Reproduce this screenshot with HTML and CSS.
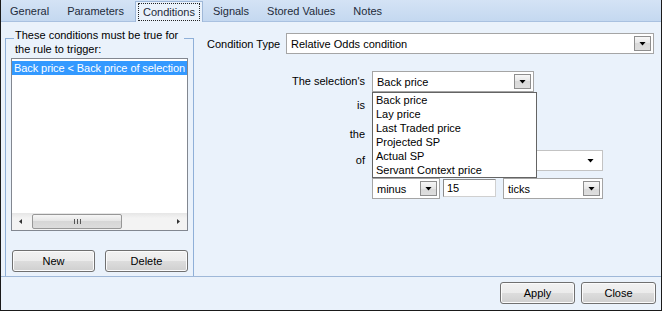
FILE: index.html
```html
<html>
<head>
    <title>Rule Conditions</title>
    <link rel="stylesheet" href="styles.css">
</head>
<body>
<div class="window">
    <div class="tabs">
        <span class="tab">General</span>
        <span class="tab">Parameters</span>
        <span class="tab active"><span class="focus">Conditions</span></span>
        <span class="tab">Signals</span>
        <span class="tab">Stored Values</span>
        <span class="tab">Notes</span>
    </div>

    <div class="page">
        <div class="group">
            <div class="caption">These conditions must be true for the rule to trigger:</div>
            <div class="list">
                <div class="items">
                    <div class="item selected">Back price &lt; Back price of selection</div>
                </div>
                <div class="hscroll">
                    <span class="sb-btn"><span class="arrow-left"></span></span>
                    <span class="track"><span class="thumb"><span class="grip"></span></span></span>
                    <span class="sb-btn"><span class="arrow-right"></span></span>
                </div>
            </div>
            <div class="group-buttons">
                <button class="btn">New</button>
                <button class="btn">Delete</button>
            </div>
        </div>

        <div class="editor">
            <div class="type-row">
                <label class="type-label">Condition Type</label>
                <div class="combo grow"><span class="value">Relative Odds condition</span><span class="drop"></span></div>
            </div>

            <div class="fields">
                <label class="field-label">The selection's</label>
                <div class="cell">
                    <div class="combo w-sel"><span class="value">Back price</span><span class="drop"></span></div>
                    <div class="dropdown">
                        <div class="option">Back price</div>
                        <div class="option">Lay price</div>
                        <div class="option">Last Traded price</div>
                        <div class="option">Projected SP</div>
                        <div class="option">Actual SP</div>
                        <div class="option">Servant Context price</div>
                    </div>
                </div>

                <label class="field-label">is</label>
                <div class="cell">
                    <div class="combo w-is"><span class="value"></span><span class="drop"></span></div>
                </div>

                <label class="field-label">the</label>
                <div class="cell">
                    <div class="combo w-the"><span class="value"></span><span class="drop"></span></div>
                </div>

                <label class="field-label">of</label>
                <div class="cell">
                    <div class="combo flat w-of"><span class="value"></span><span class="drop"></span></div>
                </div>

                <span></span>
                <div class="cell inline">
                    <div class="combo w-minus"><span class="value">minus</span><span class="drop"></span></div>
                    <div class="textbox">15</div>
                    <div class="combo w-ticks"><span class="value">ticks</span><span class="drop"></span></div>
                </div>
            </div>
        </div>
    </div>

    <div class="footer">
        <button class="btn wide">Apply</button>
        <button class="btn wide">Close</button>
    </div>
</div>
</body>
</html>
```

FILE: styles.css
```css
* {
    box-sizing: border-box;
}

body {
    margin: 0;
    font: 11px "Liberation Sans", Arial, sans-serif;
    color: #000;
    background: #fff;
}

.window {
    width: 662px;
    height: 311px;
    border: 1px solid #1a1a1a;
    border-top: 0;
    background: #eaf2fb;
    display: flex;
    flex-direction: column;
}

/* tab strip */
.tabs {
    height: 21px;
    flex: none;
    display: flex;
    align-items: flex-end;
    background: linear-gradient(#d4e3f5, #c4d8f0);
}

.tab {
    height: 21px;
    padding: 2px 9px 0;
    line-height: 19px;
    color: #1e2b3a;
    white-space: nowrap;
}

.tab.active {
    position: relative;
    z-index: 1;
    height: 21px;
    margin: 0 1px -1px 2px;
    padding: 1px 2px 0;
    background: #eaf2fb;
    border: 1px solid #9fb8d8;
    border-bottom: 0;
}

.focus {
    display: block;
    height: 18px;
    padding: 0 4px;
    line-height: 16px;
    border: 1px dotted #222;
}

/* page */
.page {
    height: 256px;
    flex: none;
    display: flex;
    padding-left: 4px;
    border-top: 1px solid #a9c1e0;
    border-bottom: 1px solid #9fb8d8;
}

.group {
    width: 189px;
    margin-top: 16px;
    padding: 0 5px;
    border: 1px solid #8fb0d8;
    border-bottom: 0;
}

.caption {
    width: 170px;
    margin: -11px 0 0 3px;
    padding-left: 1px;
    line-height: 14px;
    background: #eaf2fb;
}

.list {
    height: 173px;
    margin-top: 2px;
    display: flex;
    flex-direction: column;
    background: #fff;
    border: 1px solid #828790;
}

.items {
    flex: 1;
    padding-top: 2px;
}

.item {
    height: 14px;
    line-height: 14px;
    padding-left: 2px;
    letter-spacing: -0.08px;
    white-space: nowrap;
    overflow: hidden;
}

.item.selected {
    background: #3399ff;
    color: #fff;
}

.hscroll {
    height: 17px;
    display: flex;
    background: linear-gradient(#e6e6e6, #f3f3f3 30%, #f3f3f3);
}

.sb-btn {
    width: 17px;
    display: flex;
    align-items: center;
    justify-content: center;
}

.arrow-left,
.arrow-right {
    width: 3px;
    height: 5px;
    background: #333;
}

.arrow-left {
    clip-path: polygon(100% 0, 100% 100%, 0 50%);
}

.arrow-right {
    clip-path: polygon(0 0, 100% 50%, 0 100%);
}

.track {
    flex: 1;
    padding: 1px 0 1px 3px;
}

.thumb {
    width: 90px;
    height: 15px;
    display: flex;
    align-items: center;
    justify-content: center;
    border: 1px solid #979797;
    border-radius: 2px;
    background: linear-gradient(#f6f6f6, #e4e4e4 50%, #d6d6d6 50%, #dcdcdc);
}

.grip {
    width: 7px;
    height: 5px;
    background: repeating-linear-gradient(90deg, #555 0 1px, transparent 1px 3px);
}

.group-buttons {
    display: flex;
    gap: 10px;
    margin: 19px 0 0 1px;
}

.btn {
    width: 83px;
    height: 22px;
    padding: 0;
    font: inherit;
    color: #000;
    border: 1px solid #707070;
    border-radius: 3px;
    background: linear-gradient(#f2f2f2, #ebebeb 50%, #dddddd 50%, #cfcfcf);
    box-shadow: inset 0 0 0 1px #fbfbfb;
}

.btn.wide {
    width: 75px;
}

/* right side */
.editor {
    flex: 1;
    padding: 11px 7px 0 13px;
}

.type-row {
    display: flex;
    align-items: center;
}

.type-label {
    width: 79px;
}

.combo {
    position: relative;
    display: flex;
    align-items: center;
    height: 21px;
    padding-left: 4px;
    background: #fff;
    border: 1px solid #a5a5a5;
}

.combo.grow {
    flex: 1;
}

.combo .value {
    flex: 1;
    white-space: nowrap;
}

.drop {
    width: 17px;
    height: 15px;
    margin-right: 2px;
    display: flex;
    align-items: center;
    justify-content: center;
    border: 1px solid #8e8e8e;
    background: linear-gradient(#f7f7f7, #e6e6e6 50%, #d9d9d9 50%, #dedede);
}

.drop::before {
    content: "";
    width: 7px;
    height: 4px;
    background: #000;
    clip-path: polygon(0 0, 100% 0, 50% 100%);
}

.combo.flat {
    border-color: #c3c3c3;
}

.combo.flat .drop {
    border: 0;
    background: none;
    margin-right: 3px;
}

.fields {
    display: grid;
    grid-template-columns: 158px 1fr;
    grid-template-rows: 24px 29px 26px 28px 21px;
    column-gap: 7px;
    margin-top: 17px;
}

.field-label {
    align-self: start;
    line-height: 21px;
    text-align: right;
    white-space: nowrap;
}

.cell {
    position: relative;
    align-self: start;
}

.cell.inline {
    display: flex;
    align-items: flex-start;
}

.w-sel { width: 162px; }
.w-is { width: 130px; }
.w-the { width: 140px; }
.w-of { width: 231px; }
.w-minus { width: 68px; }
.w-ticks { width: 100px; margin-left: 7px; }

.textbox {
    width: 53px;
    height: 18px;
    margin: 1px 0 0 3px;
    padding-left: 3px;
    line-height: 16px;
    background: #fff;
    border: 1px solid;
    border-color: #8a8a8a #d0d0d0 #d0d0d0 #8a8a8a;
}

.dropdown {
    position: absolute;
    z-index: 2;
    top: 21px;
    left: 0;
    width: 165px;
    background: #fff;
    border: 1px solid #646464;
}

.option {
    height: 14px;
    line-height: 14px;
    padding-left: 3px;
    white-space: nowrap;
}

.footer {
    flex: 1;
    display: flex;
    justify-content: flex-end;
    gap: 6px;
    padding: 5px 5px 0 0;
}
```
